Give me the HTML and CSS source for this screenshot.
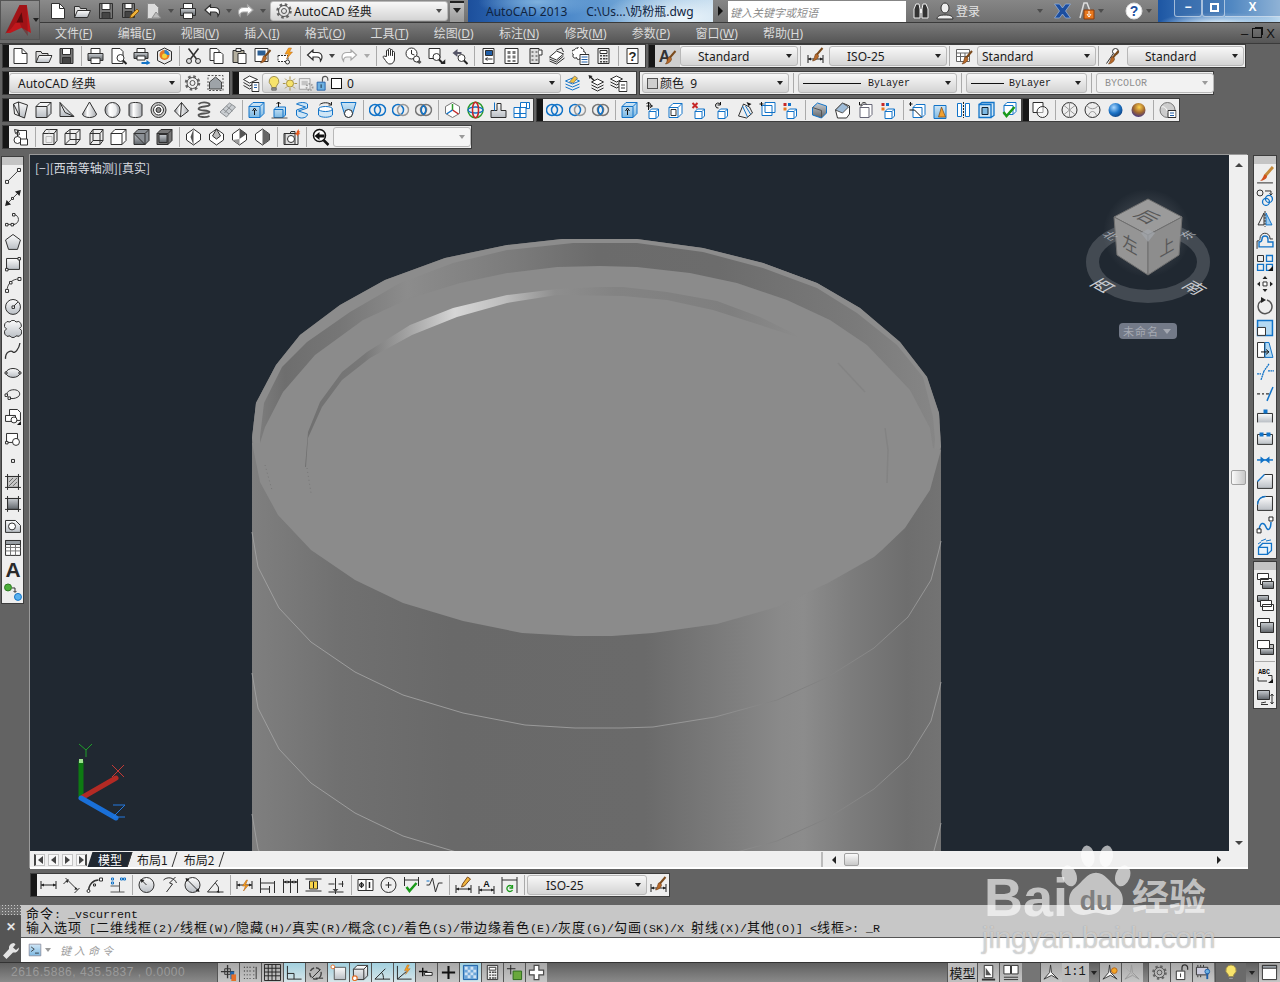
FILE: index.html
```html
<!DOCTYPE html>
<html lang="zh">
<head>
<meta charset="utf-8">
<title>AutoCAD 2013</title>
<link rel="stylesheet" href="styles.css">
</head>
<body>
<svg class="defs" xmlns="http://www.w3.org/2000/svg">
<defs>
<linearGradient id="gs" x1="0" y1="0" x2="0" y2="1"><stop offset="0" stop-color="#fdfdfd"/><stop offset="1" stop-color="#b9bec4"/></linearGradient>
<linearGradient id="gd" x1="0" y1="0" x2="0" y2="1"><stop offset="0" stop-color="#c8ccd0"/><stop offset="1" stop-color="#5f6469"/></linearGradient>
<linearGradient id="gh" x1="0" y1="0" x2="1" y2="0"><stop offset="0" stop-color="#8d9095"/><stop offset=".35" stop-color="#fff"/><stop offset="1" stop-color="#a6a9ae"/></linearGradient>
<linearGradient id="gb" x1="0" y1="0" x2="0" y2="1"><stop offset="0" stop-color="#cfe6f6"/><stop offset="1" stop-color="#7db8e2"/></linearGradient>
<radialGradient id="gball" cx=".38" cy=".32" r=".75"><stop offset="0" stop-color="#a9d7ff"/><stop offset=".55" stop-color="#1c74c7"/><stop offset="1" stop-color="#0c3f7f"/></radialGradient>
<radialGradient id="gball2" cx=".55" cy=".3" r=".8"><stop offset="0" stop-color="#ffd24a"/><stop offset=".5" stop-color="#a0672f"/><stop offset="1" stop-color="#2c2a9a"/></radialGradient>
<g id="br"><path d="M17 1 11 8" stroke="#7a4a1c" stroke-width="2"/><path d="M10 7c2-.5 3 .6 3 2.500-1 2.500-3 4-6 4.500 1.500-1.500 2-4.500 3-7z" fill="#b8692a" stroke="#6b3c14" stroke-width=".6"/></g>
<g id="cu"><path d="M5.500 10.500h7v7h-7z M5.500 10.500l2.500-2.500h7v7l-2.500 2.500 M12.500 10.500 15 8" fill="#fff" stroke="#1173c8"/></g>
<g id="dimb"><path d="M1.500 5v8M16.500 5v8M1.500 9h15" stroke="#222"/><path d="M1.500 9l3-1.500v3zM16.500 9l-3-1.500v3z" fill="#222" stroke="none"/></g>
<g id="mag"><circle cx="11" cy="11" r="3.500" fill="#fff" stroke="#333"/><path d="M13.500 13.500l3.500 3.500" stroke="#222" stroke-width="2"/></g>
<g id="ov"><circle cx="6.500" cy="9" r="5.500" stroke="#1173c8" stroke-width="1.500"/><circle cx="11.500" cy="9" r="5.500" stroke="#1173c8" stroke-width="1.500"/></g>
</defs>
<symbol id="new" viewBox="0 0 18 18"><path d="M2.500 1.500h8l5 5v10h-13z" fill="#fff"/><path d="M10.500 1.500v5h5"/></symbol>
<symbol id="open" viewBox="0 0 18 18"><path d="M1.500 15.500v-11h5l1 2h6v2" fill="#ddd"/><path d="M1.500 15.500l3-7h13l-3 7z" fill="url(#gs)"/></symbol>
<symbol id="save" viewBox="0 0 18 18"><path d="M2.500 1.500h13v15h-13z" fill="#777"/><path d="M5 1.500h8v6H5z" fill="#fff"/><path d="M5 10.500h8v6H5z" fill="#444"/></symbol>
<symbol id="saveas" viewBox="0 0 18 18"><path d="M1.500 1.500h12v14h-12z" fill="#777"/><path d="M4 1.500h7v5H4z" fill="#fff"/><path d="M4 9.500h7v6H4z" fill="#444"/><path d="M9 16l1-3 6-6 2 2-6 6z" fill="#f0b43c" stroke="#8a5a10"/></symbol>
<symbol id="pub" viewBox="0 0 18 18"><path d="M2.500 1.500h7l4 4v11h-11z" fill="#dcdcdc" stroke="#8d8d8d"/><path d="M7 16l4-6 5 6z" fill="#bbb" stroke="#8d8d8d"/></symbol>
<symbol id="print" viewBox="0 0 18 18"><path d="M4.500 6V1.500h9V6" fill="#fff"/><path d="M1.500 6.500h15v7h-15z" fill="url(#gd)"/><path d="M4.500 11h9v5.500h-9z" fill="#fff"/></symbol>
<symbol id="prev" viewBox="0 0 18 18"><path d="M2.500 1.500h8l3 3v12h-11z" fill="#fff"/><use href="#mag"/></symbol>
<symbol id="plot" viewBox="0 0 18 18"><path d="M4.500 5V1.500h8V5" fill="#fff"/><path d="M1.500 5.500h14v6h-14z" fill="url(#gd)"/><path d="M4.500 9h8v4h-8z" fill="#fff"/><path d="M9 15h5v-2l4 3-4 2v-1H9z" fill="#1173c8" stroke="none"/></symbol>
<symbol id="p3d" viewBox="0 0 18 18"><path d="M9 1l7 3.500v9L9 17l-7-3.500v-9z" fill="#e8e8e8"/><circle cx="9" cy="8" r="5" fill="#e97b24" stroke="none"/><path d="M9 3a5 5 0 0 1 5 5H9z" fill="#2a82d0" stroke="none"/><circle cx="9" cy="9" r="2.500" fill="#f3d23a" stroke="none"/></symbol>
<symbol id="cut" viewBox="0 0 18 18"><path d="M4 1.500 12 12M14 1.500 6 12" stroke-width="1.500"/><circle cx="4.500" cy="14" r="2.500" fill="#ddd"/><circle cx="13.500" cy="14" r="2.500" fill="#ddd"/></symbol>
<symbol id="copy" viewBox="0 0 18 18"><path d="M2.500 1.500h7l2 2v10h-9z" fill="#fff"/><path d="M6.500 5.500h7l2 2v9h-9z" fill="#fff"/></symbol>
<symbol id="paste" viewBox="0 0 18 18"><path d="M2.500 3.500h11v12h-11z" fill="#b5b0a0"/><path d="M5.500 1.500h5v3h-5z" fill="#eee"/><path d="M7.500 6.500h8v10h-8z" fill="#fff"/></symbol>
<symbol id="match" viewBox="0 0 18 18"><path d="M1.500 1.500h13v13h-13z" fill="#fff"/><path d="M4 3.500h8v5H4z" fill="#2b5f95" stroke="none"/><use href="#br" y="2"/></symbol>
<symbol id="bolt" viewBox="0 0 18 18"><path d="M1.500 8.500h10v6h-10z" stroke-dasharray="2 1" fill="#fff"/><circle cx="11" cy="15" r="2" fill="#fff"/><path d="M12 1 8.500 7H12l-2 5 6-7h-3l2-4z" fill="#f6a01c" stroke="#b5651d" stroke-width=".5"/></symbol>
<symbol id="undo" viewBox="0 0 18 18"><path d="M7.500 3 2 8l5.500 5v-3h4c2 0 3.500 1 3.500 4 1-1.200 1.500-2.700 1.500-4 0-3-2-4.500-5-4.500h-4z" fill="#fff" stroke-width="1.200"/></symbol>
<symbol id="redo" viewBox="0 0 18 18"><path d="M10.500 3 16 8l-5.500 5v-3h-4c-2 0-3.500 1-3.500 4-1-1.200-1.500-2.700-1.500-4 0-3 2-4.500 5-4.500h4z" fill="#fff" stroke="#a8a8a8" stroke-width="1.200"/></symbol>
<symbol id="hand" viewBox="0 0 18 18"><path d="M5 9.500V4a1 1 0 0 1 2 0v4.500V2.500a1 1 0 0 1 2 0v6-5a1 1 0 0 1 2 0v5.500-3.500a1 1 0 0 1 2 0V12c0 3-2 5-4.500 5S5.500 15.500 4 13.500L1.800 10.500c-.7-1 .7-2 1.500-1.200z" fill="#fff"/></symbol>
<symbol id="zr" viewBox="0 0 18 18"><circle cx="7" cy="6.500" r="5.500" fill="#fff"/><path d="M7 3v4l3 1"/><path d="M9 13l1-2 2-1 5 5-2 2z" fill="#555" stroke="none"/><circle cx="12" cy="12" r="3" fill="#fff"/></symbol>
<symbol id="zw" viewBox="0 0 18 18"><path d="M1.500 1.500h11v10h-11z" fill="#fff"/><use href="#mag" x="-2" y="-1"/><path d="M13 17l5-5v5z" fill="#222" stroke="none"/></symbol>
<symbol id="zp" viewBox="0 0 18 18"><path d="M2 6l5-4v3h4v2H7v3z" fill="#556" stroke="none"/><use href="#mag"/></symbol>
<symbol id="prop" viewBox="0 0 18 18"><path d="M3.500 1.500h11v15h-11z" fill="#fff"/><path d="M6 3.500h7v5H6z" fill="#1f5ea8"/><path d="M6 12h7M6 12l2-1.500M6 12l2 1.500" stroke="#333"/></symbol>
<symbol id="dc" viewBox="0 0 18 18"><path d="M2.500 1.500h13v15h-13z" fill="#fff"/><path d="M5 4h3v3H5zM10 4h3v3h-3zM5 8.500h3v3H5zM10 8.500h3v3h-3zM5 13h3v2H5zM10 13h3v2h-3z" fill="#777" stroke="none"/></symbol>
<symbol id="tp" viewBox="0 0 18 18"><path d="M4.500 1.500h9v15h-9z" fill="#ddd"/><path d="M6 4h2v2H6zM10 4h2v2h-2zM6 8h2v2H6zM10 8h2v2h-2zM6 12h2v2H6zM10 12h2v2h-2z" fill="#888" stroke="none"/><path d="M13.500 3h3v5h-3" fill="#fff"/></symbol>
<symbol id="ss" viewBox="0 0 18 18"><path d="M1 10l7-6 7 3-7 6z" fill="#fff"/><path d="M1 12l7 3 7-6M1 14l7 3 8-6"/><path d="M8 3l5-2 2 4" /></symbol>
<symbol id="mk" viewBox="0 0 18 18"><path d="M3 3a2 2 0 0 1 3-1.500 2 2 0 0 1 4 0 2 2 0 0 1 2 3 2 2 0 0 1 0 4 2 2 0 0 1-3 2 2 2 0 0 1-4 0 2 2 0 0 1-3-3 2 2 0 0 1 1-4.500z" fill="#fff"/><path d="M8.500 7.500h9v10h-9z" fill="#fff"/><path d="M10 10h6M10 12.500h6M10 15h6" stroke="#1f5ea8"/></symbol>
<symbol id="calc" viewBox="0 0 18 18"><path d="M3.500 1.500h11v15h-11z" fill="#eee"/><path d="M5.500 3.500h7v3h-7z" fill="#fff"/><path d="M5.500 8h2v1.500h-2zM8.500 8h2v1.500h-2zM11 8h2v1.500h-2zM5.500 11h2v1.500h-2zM8.500 11h2v1.500h-2zM11 11h2v1.500h-2zM5.500 14h2v1.500h-2zM8.500 14h2v1.500h-2zM11 14h2v1.500h-2z" fill="#444" stroke="none"/></symbol>
<symbol id="dst" viewBox="0 0 18 18"><use href="#dimb" y="3"/><use href="#br" x="-1"/></symbol>
<symbol id="tbs" viewBox="0 0 18 18"><path d="M1.500 2.500h13v12h-13zM1.500 6h13M1.500 9.500h13M5.500 6v8.500M10 6v8.500" fill="#fff" stroke="#666"/><use href="#br" y="3"/></symbol>
<symbol id="mls" viewBox="0 0 18 18"><circle cx="11" cy="4.500" r="3" fill="#fff"/><path d="M8.500 7 2 16.500"/><use href="#br" x="-3" y="3"/></symbol>
<symbol id="gear" viewBox="0 0 18 18"><circle cx="9" cy="9" r="6.500" stroke="#666" stroke-width="2.500" stroke-dasharray="2.500 2.600"/><circle cx="9" cy="9" r="5.500" stroke="#555"/><circle cx="9" cy="9" r="2.500" stroke="#555"/></symbol>
<symbol id="ws" viewBox="0 0 18 18"><path d="M1.500 1.500h15v15h-15z" stroke-dasharray="2 1.500" stroke="#555"/><path d="M9 3l6 5v7H3V8z" fill="#9ea3a8" stroke="#444"/></symbol>
<symbol id="lay" viewBox="0 0 18 18"><path d="M2 5.500 8 2l8 3.500-8 3.500z" fill="#fff"/><path d="M2 8.500l6 3.500 3-1.500M2 11.500l6 3.500 2-1"/><path d="M10.500 8.500h7v9h-7z" fill="#fff"/><path d="M12.500 11h3M12.500 13.500h3" stroke="#1f5ea8"/></symbol>
<symbol id="laym" viewBox="0 0 18 18"><path d="M2 7l7-3 7 3-7 3z" fill="#fff" stroke="#1173c8"/><path d="M2 10l7 3 7-3M2 13l7 3 7-3" stroke="#1173c8"/><path d="M6 8l5-6 3 2-4 5z" fill="#f0c040" stroke="#555" stroke-width=".6"/></symbol>
<symbol id="layc" viewBox="0 0 18 18"><path d="M5 8l6-3 6 3-6 3z" fill="#fff"/><path d="M5 11l6 3 6-3M5 14l6 3 6-3"/><path d="M2 1l4 1-1 1 3 3-1 1-3-3-1 1z" fill="#222" stroke="none"/></symbol>
<symbol id="layp" viewBox="0 0 18 18"><path d="M1 5l6-3 6 3-6 3z" fill="#fff"/><path d="M1 8l6 3 3-1.500M1 11l6 3 3-1.500"/><path d="M9.500 7.500h8v10h-8z" fill="#fff"/><path d="M11.500 11h4M11.500 14h4"/></symbol>
<symbol id="bulb" viewBox="0 0 18 18"><path d="M9 1a5.500 5.500 0 0 0-3.500 9.700c.8.8 1 1.800 1 2.800h5c0-1 .2-2 1-2.800A5.500 5.500 0 0 0 9 1z" fill="#f7e36b" stroke="#9a8a4a"/><path d="M6.500 14h5v2.500h-5z" fill="#999" stroke="#666"/></symbol>
<symbol id="sun" viewBox="0 0 18 18"><circle cx="9" cy="9" r="4" fill="#f7e36b" stroke="#a08a3a"/><path d="M9 1v3M9 14v3M1 9h3M14 9h3M3.500 3.500l2 2M12.500 12.500l2 2M14.500 3.500l-2 2M5.500 12.500l-2 2" stroke="#a08a3a"/></symbol>
<symbol id="frz" viewBox="0 0 18 18"><path d="M1.500 3.500h12v12h-12z" fill="#eee" stroke="#9a9a9a"/><path d="M4 6h7v5H4z" fill="#c4c4c4" stroke="none"/><circle cx="13" cy="13" r="3.500" stroke="#999" stroke-width="2" stroke-dasharray="1.500 1.500"/></symbol>
<symbol id="lck" viewBox="0 0 18 18"><path d="M9.500 7V4a3 3 0 0 1 6 0v2" stroke="#555" stroke-width="1.300"/><path d="M3.500 7.500h9v9h-9z" fill="#6db0e0" stroke="#1f5ea8"/><path d="M8 10v4" stroke="#123"/></symbol>
<symbol id="poly" viewBox="0 0 18 18"><path d="M2 3l5-2 9 3-3 13-5-2z" fill="url(#gs)"/><path d="M7 1l1 14M2 3l1 10 5 2"/></symbol>
<symbol id="box" viewBox="0 0 18 18"><path d="M1.500 5.500l4-4h11v11l-4 4h-11z" fill="url(#gs)"/><path d="M1.500 5.500h11v11M12.500 5.500l4-4"/></symbol>
<symbol id="wedge" viewBox="0 0 18 18"><path d="M2.500 1.500v14h14z" fill="url(#gs)"/><path d="M2.500 1.500l5 10 9 4"/></symbol>
<symbol id="cone" viewBox="0 0 18 18"><path d="M9 1 2 13a7 3.500 0 0 0 14 0z" fill="url(#gh)"/></symbol>
<symbol id="sph" viewBox="0 0 18 18"><circle cx="9" cy="9" r="7.500" fill="url(#gh)"/><ellipse cx="9" cy="9" rx="4.500" ry="6" fill="#fff" stroke="none" opacity=".6"/></symbol>
<symbol id="cyl" viewBox="0 0 18 18"><path d="M2.500 4c0-1.500 2-2.500 6.500-2.500s6.500 1 6.500 2.500v10c0 1.500-2 2.500-6.500 2.500s-6.500-1-6.500-2.500z" fill="url(#gh)"/></symbol>
<symbol id="tor" viewBox="0 0 18 18"><circle cx="9" cy="9" r="7.500" fill="#ccc"/><circle cx="9" cy="9" r="5" fill="#fff"/><circle cx="9" cy="9" r="2.500" fill="#888"/></symbol>
<symbol id="pyr" viewBox="0 0 18 18"><path d="M9 1.500 2 10l6 6 8-6z" fill="url(#gh)"/><path d="M9 1.500 8 16"/></symbol>
<symbol id="hel" viewBox="0 0 18 18"><path d="M3 3c5-3 12-1 11 1-1 2-11 1-11 4 0 2 11 1 11 3s-11 1-11 3c0 2 7 3 11 1" stroke="#555" stroke-width="1.800"/></symbol>
<symbol id="psf" viewBox="0 0 18 18"><path d="M1.500 11 11 2l6 4-9 10z" fill="#c9cdd1" stroke="#8b8f93"/><path d="M4.500 8l6 5M8 5l6 5M6 12l7-8" stroke="#8b8f93"/></symbol>
<symbol id="ext" viewBox="0 0 18 18"><path d="M1.500 5.500l4-4h11v11l-4 4h-11z" fill="url(#gb)" stroke="#1173c8"/><path d="M1.500 5.500h11v11M12.500 5.500l4-4" stroke="#1173c8"/><path d="M7 14V9M5 10l2-3 2 3" stroke="#111"/></symbol>
<symbol id="pp" viewBox="0 0 18 18"><path d="M3.500 8.500h9v8h-9zM3.500 8.500 6 6h9v8l-2.500 2.500" fill="url(#gb)" stroke="#1173c8"/><path d="M8 6V1M6 3l2-2 2 2" stroke="#111"/><path d="M1 17h16" stroke="#555"/></symbol>
<symbol id="swp" viewBox="0 0 18 18"><path d="M3 3c3-2 9-2 11 0v4l-9 3 9 3c0 2-2 4-6 4-2 0-4-1-5-3V9l9-3z" fill="#cfe6f6" stroke="#1173c8"/></symbol>
<symbol id="rev" viewBox="0 0 18 18"><path d="M2 8h14v6c-2 3-12 3-14 0z" fill="#cfe6f6" stroke="#1173c8"/><ellipse cx="9" cy="8" rx="7" ry="2.500" fill="#fff" stroke="#1173c8"/><path d="M3 4c2-3 10-3 12 0" stroke="#222"/><path d="M15 1v3h-3" stroke="#222"/></symbol>
<symbol id="lft" viewBox="0 0 18 18"><path d="M1.500 1.500h15l-3 10a4.500 4.500 0 0 1-9 0z" fill="url(#gb)" stroke="#1173c8"/><circle cx="9" cy="12.500" r="4" fill="#fff" stroke="#222"/></symbol>
<symbol id="un" viewBox="0 0 18 18"><use href="#ov"/></symbol>
<symbol id="sub" viewBox="0 0 18 18"><circle cx="6.500" cy="9" r="5.500" stroke="#1173c8" stroke-width="1.500"/><circle cx="11.500" cy="9" r="5.500" stroke="#999" stroke-width="1.500"/></symbol>
<symbol id="int" viewBox="0 0 18 18"><circle cx="6.500" cy="9" r="5.500" stroke="#777" stroke-width="1.500"/><circle cx="11.500" cy="9" r="5.500" stroke="#777" stroke-width="1.500"/><path d="M9 4.500a5.500 5.500 0 0 1 0 9 5.500 5.500 0 0 1 0-9z" stroke="#1173c8" stroke-width="1.500"/></symbol>
<symbol id="mv3" viewBox="0 0 18 18"><path d="M9 1.500l7 4v7l-7 4-7-4v-7z" stroke="#777" fill="#fff"/><path d="M9 9V3" stroke="#2a9a2a" stroke-width="1.500"/><path d="M9 9l6 4" stroke="#c62828" stroke-width="1.500"/><path d="M9 9l-6 4" stroke="#1173c8" stroke-width="1.500"/></symbol>
<symbol id="ro3" viewBox="0 0 18 18"><ellipse cx="9" cy="9" rx="7.500" ry="7.800" stroke="#2a9a2a" stroke-width="1.500"/><ellipse cx="9" cy="9" rx="7.500" ry="3" stroke="#1173c8" stroke-width="1.300"/><ellipse cx="9" cy="9" rx="3" ry="7.800" stroke="#c62828" stroke-width="1.500"/></symbol>
<symbol id="al3" viewBox="0 0 18 18"><path d="M1.500 16.500v-7h6v-7h4v7h5v7z" fill="url(#gs)"/><path d="M5 1.500v8" stroke="#1173c8"/></symbol>
<symbol id="ar3" viewBox="0 0 18 18"><g stroke="#1173c8" fill="#fff"><path d="M8 1.500h6v6H8zM14 1.500h3v6h-3z"/><path d="M1.500 6.500h6v6h-6zM7.500 6.500h6v6h-6z"/><path d="M1.500 12.500h6v4h-6zM7.500 12.500h6v4h-6z"/></g></symbol>
<symbol id="fe1" viewBox="0 0 18 18"><use href="#ext"/></symbol>
<symbol id="fe2" viewBox="0 0 18 18"><use href="#cu"/><path d="M3 5h5M6 3l3 2-3 2M5 1v8M3 3l2-2 2 2" stroke="#111"/></symbol>
<symbol id="fe3" viewBox="0 0 18 18"><path d="M2.500 6.500h9v10h-9z M2.500 6.500l4-4h9v10l-4 4M11.500 6.500l4-4" fill="#fff" stroke="#1173c8"/><path d="M4.500 8.500h5v6h-5z" fill="none" stroke="#333"/></symbol>
<symbol id="fe4" viewBox="0 0 18 18"><use href="#cu"/><path d="M3 2l5 5M8 2 3 7" stroke="#c62828" stroke-width="2"/></symbol>
<symbol id="fe5" viewBox="0 0 18 18"><use href="#cu"/><path d="M6 7a2.500 2.500 0 1 1 2-3" stroke="#111"/><path d="M8 1v3H5" stroke="#111"/></symbol>
<symbol id="fe6" viewBox="0 0 18 18"><path d="M3 15 8 3l6 3 3 6-6 5z" fill="#eee" stroke="#333"/><path d="M7 5l5 11M10 5l5 8" stroke="#1173c8"/><path d="M11 1l5 2-3 2z" fill="#111" stroke="none"/></symbol>
<symbol id="fe7" viewBox="0 0 18 18"><path d="M6.500 1.500h10v10h-10z M3.500 4.500h10v10h-10z" fill="#fff" stroke="#1173c8"/><path d="M1 3h4M3 1v4M1 1" stroke="#111"/></symbol>
<symbol id="fe8" viewBox="0 0 18 18"><use href="#cu"/><path d="M2 2h3v3H2z" fill="#c62828" stroke="none"/><path d="M6.500 2h3v3h-3z" fill="#1173c8" stroke="none"/><path d="M2 6.500h3v3H2z" fill="#e97b24" stroke="none"/></symbol>
<symbol id="ed1" viewBox="0 0 18 18"><path d="M2 6.500 7 2l9 3v7l-5 5-9-3z" fill="url(#gd)" stroke="#1173c8"/><path d="M2 6.500l9 3v7" stroke="#555"/></symbol>
<symbol id="ed2" viewBox="0 0 18 18"><path d="M2 9 9 2l7 3v8l-3 4H4z" fill="#fff" stroke="#333"/><path d="M2 9 9 2l6 4-6 6z" fill="#9fbcd8" stroke="#555"/></symbol>
<symbol id="ed3" viewBox="0 0 18 18"><path d="M3.500 6.500h9v10h-9zM3.500 6.500l3-3h9v10l-3 3" fill="#fff" stroke="#667"/><path d="M5 3a3 3 0 0 1 5 0M3 1v3h3" stroke="#111"/></symbol>
<symbol id="s1" viewBox="0 0 18 18"><path d="M4.500 6.500h9v10h-9zM4.500 6.500l3-3h9v10l-3 3" fill="#fff" stroke="#1173c8"/><path d="M1 9h5l7 7" stroke="#111"/><path d="M2 1v4M0 3h4" stroke="#111"/></symbol>
<symbol id="s2" viewBox="0 0 18 18"><path d="M2.500 4.500h12v13h-12z" fill="url(#gb)" stroke="#1173c8"/><path d="M10 6l-3 10h7z" fill="#f0a030" stroke="#7a4a1c" stroke-width=".7"/></symbol>
<symbol id="s3" viewBox="0 0 18 18"><path d="M3 2.500h4v13H3zM11 2.500h4v13h-4z" fill="#fff" stroke="#1173c8"/><path d="M9 1v16" stroke="#222" stroke-dasharray="2 1"/></symbol>
<symbol id="s4" viewBox="0 0 18 18"><path d="M1.500 3.500h12v13h-12zM1.500 3.500l3-2h12v13l-3 2" fill="#cfe6f6" stroke="#1173c8" stroke-width="1.300"/><path d="M4.500 6.500h6v7h-6z" fill="#7db8e2" stroke="#123"/></symbol>
<symbol id="s5" viewBox="0 0 18 18"><path d="M3.500 4.500h9v9h-9zM3.500 4.500l3-3h9v9l-3 3" fill="#fff" stroke="#1173c8"/><path d="M3 11l3 4 8-9" stroke="#1a9a1a" stroke-width="2.500"/></symbol>
<symbol id="cb1" viewBox="0 0 18 18"><path d="M1.500 1.500h10v10h-10z" fill="#fff"/><circle cx="11" cy="11" r="5.500" fill="#fff" fill-opacity=".5"/></symbol>
<symbol id="vw1" viewBox="0 0 18 18"><circle cx="9" cy="9" r="7.500"/><path d="M3 4l12 10M3 14 15 4M9 1.500v15" stroke="#999"/></symbol>
<symbol id="vw2" viewBox="0 0 18 18"><circle cx="9" cy="9" r="7.500"/><path d="M3 4c3 5 9 5 12 0M5 15c1-6 7-6 8 0" stroke="#999"/></symbol>
<symbol id="vw3" viewBox="0 0 18 18"><circle cx="9" cy="9" r="7" fill="url(#gball)" stroke="none"/></symbol>
<symbol id="vw4" viewBox="0 0 18 18"><circle cx="9" cy="9" r="7" fill="url(#gball2)" stroke="none"/></symbol>
<symbol id="vw5" viewBox="0 0 18 18"><circle cx="9" cy="9" r="7.500" fill="#ccc" stroke="#777"/><path d="M3 6c3-1 6 2 6 6" stroke="#fff"/><path d="M9.500 9.500h8v7h-8z" fill="#fff"/><path d="M11.500 12h4M11.500 14.500h4" stroke="#1f5ea8"/></symbol>
<symbol id="vt" viewBox="0 0 18 18"><path d="M6 2.500h9v10h-9z" fill="#fff"/><path d="M3 1.500l5 1-1 1 1 3-2 1-1-3-1 1z" /><circle cx="6" cy="12" r="3.500" fill="#fff"/><path d="M9 11h7v6H9z" fill="#fff"/></symbol>
<symbol id="v1" viewBox="0 0 18 18"><path d="M2.500 5.500h11v11h-11zM2.500 5.500l3-4h11v11l-3 4M13.500 5.500l3-4"/><path d="M5.500 8.500h6v6h-6zM8.500 1.500v4" stroke="#bbb"/></symbol>
<symbol id="v2" viewBox="0 0 18 18"><path d="M6.500 1.500h10v10h-10zM1.500 5.500h11v11h-11zM1.500 5.500l5-4M12.500 5.500l4-4M1.500 16.500l5-5M12.500 16.500l4-5" fill="none"/></symbol>
<symbol id="v3" viewBox="0 0 18 18"><path d="M3.500 5.500h10v11h-10zM3.500 5.500l3-4h10v11l-3 4M13.500 5.500l3-4M3.500 16.500l3-4h10M6.500 1.500v11"/></symbol>
<symbol id="v4" viewBox="0 0 18 18"><path d="M1.500 5.500h11v11h-11zM1.500 5.500l4-4h11v11l-4 4M12.500 5.500l4-4" fill="#fff"/></symbol>
<symbol id="v5" viewBox="0 0 18 18"><path d="M1.500 5.500h11v11h-11z" fill="url(#gd)"/><path d="M1.500 5.500l4-4h11v11l-4 4z" fill="#8a8f94"/><path d="M1.500 5.500h11v11M12.500 5.500l4-4" stroke="#333"/></symbol>
<symbol id="v6" viewBox="0 0 18 18"><path d="M1.500 5.500l4-4h11v11l-4 4h-11z" fill="#777"/><path d="M3.500 6.500h8v8h-8z" fill="url(#gd)"/><path d="M12.500 5.500l4-4M1.500 5.500h11v11"/></symbol>
<symbol id="d1" viewBox="0 0 18 18"><path d="M9 1 2 6v6l7 5 7-5V6z" fill="#fff"/><path d="M9 1 6 9l3 8z" fill="#555" stroke="none"/></symbol>
<symbol id="d2" viewBox="0 0 18 18"><path d="M9 1 2 6v6l7 5 7-5V6z" fill="#fff"/><path d="M9 1 5 8l4 3 4-3z" fill="#bbb"/></symbol>
<symbol id="d3" viewBox="0 0 18 18"><path d="M9 1 2 6v6l7 5 7-5V6z" fill="#fff"/><path d="M9 1l7 5-7 5z" fill="#555" stroke="none"/><path d="M9 11 2 12l7 5z" fill="#999" stroke="none"/></symbol>
<symbol id="d4" viewBox="0 0 18 18"><path d="M9 1 2 6v6l7 5 7-5V6z" fill="#fff"/><path d="M9 1v16l7-5V6z" fill="#666" stroke="none"/></symbol>
<symbol id="cam" viewBox="0 0 18 18"><path d="M2.500 5.500h5l1-2h4v13h-10z" fill="#ddd"/><path d="M1.500 5.500h14v11h-14z"/><circle cx="8.500" cy="11" r="3.500" fill="#fff"/><path d="M14 4l2-3 .5 2.500L18 3l-1.500 2L18 6l-2.500.5-.5 2-1-2-2-.5 2-1z" fill="#e8571c" stroke="none"/></symbol>
<symbol id="vid" viewBox="0 0 18 18"><circle cx="8" cy="7.500" r="6" fill="#fff" stroke="#111" stroke-width="1.500"/><path d="M3 8l5-4v2.500h5v3H8V12z" fill="#111" stroke="none"/><path d="M12 12l5 5" stroke="#111" stroke-width="2.500"/></symbol>
<symbol id="line" viewBox="0 0 18 18"><path d="M3 15 15 3" stroke="#444"/><path d="M1.500 13.500h3v3h-3zM13.500 1.500h3v3h-3z" fill="#fff"/></symbol>
<symbol id="xl" viewBox="0 0 18 18"><path d="M2 16 16 2" stroke="#444"/><path d="M7.500 8.500h2v2h-2z" fill="#fff"/><path d="M17 1l-6 1.500 4.500 4.500zM1 17l6-1.500L2.500 11z" fill="#222" stroke="none"/></symbol>
<symbol id="pl" viewBox="0 0 18 18"><path d="M3 13.500h8M10 13.500c6-1 6-9 0-10" stroke="#444"/><path d="M1.500 12.500h2.500v2.500h-2.500zM7 12.500h2.500v2.500H7zM8.500 2.500h2.500v2.500H8.500z" fill="#fff"/></symbol>
<symbol id="pg" viewBox="0 0 18 18"><path d="M9 1.500l7.500 5.500-3 9.500h-9l-3-9.500z" fill="url(#gs)"/></symbol>
<symbol id="rc" viewBox="0 0 18 18"><path d="M2.500 3.500h13v11h-13z" fill="url(#gs)"/><path d="M1.500 13.500h2.500v2.500h-2.500zM14 2.500h2.500v2.500H14z" fill="#fff"/></symbol>
<symbol id="ac" viewBox="0 0 18 18"><path d="M3 15C3 8 8 3 15 3" stroke="#444"/><path d="M1.500 13.500h3v3h-3zM5.500 5.500h2.500V8H5.500zM14 1.500h3v3h-3z" fill="#fff"/></symbol>
<symbol id="ci" viewBox="0 0 18 18"><circle cx="9" cy="9" r="7.500" fill="url(#gs)"/><path d="M9 9l5-5" stroke="#333"/><path d="M8 8h2.500v2.500H8z" fill="#fff"/></symbol>
<symbol id="rv" viewBox="0 0 18 18"><path d="M6 2a3.500 3.500 0 0 1 6 0 3.500 3.500 0 0 1 3.500 6.500A3.500 3.500 0 0 1 12 16a3.500 3.500 0 0 1-6 0 3.500 3.500 0 0 1-3.500-7A3.500 3.500 0 0 1 6 2z" fill="url(#gs)"/></symbol>
<symbol id="sp" viewBox="0 0 18 18"><path d="M1.500 17C1 10 7 8 9 10s6-3 7-9" stroke="#333" stroke-width="1.300"/></symbol>
<symbol id="el" viewBox="0 0 18 18"><ellipse cx="9" cy="9" rx="7" ry="4.500" fill="url(#gs)"/><path d="M1 8h2v2H1zM15 8h2v2h-2z" fill="#fff"/></symbol>
<symbol id="ea" viewBox="0 0 18 18"><path d="M3 9c-1-4 5-6 9-5s5 5 2 7-7 2-9 1" stroke="#333"/><path d="M1 8h2.500v2.500H1zM4 11h2.500v2.500H4z" fill="#fff"/></symbol>
<symbol id="ins" viewBox="0 0 18 18"><path d="M5.500 1.500h8l3 3v8h-11z" fill="#fff"/><path d="M1.500 7.500h10v6h-10z" fill="#fff"/><circle cx="10" cy="12" r="3" fill="#fff"/><path d="M13 17l4-4v4z" fill="#111" stroke="none"/></symbol>
<symbol id="mkb" viewBox="0 0 18 18"><path d="M2.500 3.500h11v9h-11z" fill="#fff"/><circle cx="12" cy="12" r="3.500" fill="#fff"/><path d="M1.500 11.500h2.500v2.500h-2.500z" fill="#fff"/></symbol>
<symbol id="sd" viewBox="0 0 18 18"><path d="M7.500 7.500h3v3h-3z" fill="#eee"/></symbol>
<symbol id="ha" viewBox="0 0 18 18"><path d="M3.500 3.500h11v11h-11z" fill="#c9c9c9"/><path d="M5 9l4-4M5 13l8-8M9 13l4-4" stroke="#666"/><path d="M1 3.500h16M1 14.500h16M3.500 1v16M14.500 1v16"/></symbol>
<symbol id="gr" viewBox="0 0 18 18"><path d="M3.500 3.500h11v11h-11z" fill="url(#gd)"/><path d="M1 3.500h16M1 14.500h16M3.500 1v16M14.500 1v16"/></symbol>
<symbol id="rg" viewBox="0 0 18 18"><path d="M1.500 3.500h10l5 5v7h-15z" fill="url(#gs)"/><circle cx="8" cy="9.500" r="3.500" fill="#fff"/></symbol>
<symbol id="tb" viewBox="0 0 18 18"><path d="M1.500 1.500h15v15h-15z" fill="#fff"/><path d="M1.500 1.500h15v4h-15z" fill="#9aa0a6"/><path d="M1.500 8.500h15M1.500 12h15M6.500 5.500v11M11.500 5.500v11" stroke="#777"/></symbol>
<symbol id="as" viewBox="0 0 18 18"><circle cx="4" cy="4.500" r="3.500" fill="#4caf3a" stroke="#2c7a20"/><circle cx="14" cy="14" r="3.500" fill="#59b0ee" stroke="#1173c8"/><path d="M8 5h3v4M9.500 8l1.500 1.500L12.500 8"/></symbol>
<symbol id="er" viewBox="0 0 18 18"><path d="M17 1l-8 9" stroke="#c48a3a" stroke-width="3"/><path d="M8 9c2-.5 3 .6 3 2-1 2-3 3.500-7 4 2-1.500 3-3.500 4-6z" fill="#d2501e" stroke="none"/><path d="M1 17h16"/></symbol>
<symbol id="co" viewBox="0 0 18 18"><circle cx="4" cy="5" r="3"/><circle cx="13" cy="11" r="3.500" stroke="#1173c8" stroke-width="1.300"/><circle cx="10" cy="14" r="3.500" stroke="#1173c8" stroke-width="1.300"/><path d="M9 3h6v4M13.500 5.500 15 7l1.500-1.500"/></symbol>
<symbol id="mi" viewBox="0 0 18 18"><path d="M8 3 2 15h6z"/><path d="M10 3l6 12h-6z" fill="#9ccbee" stroke="#1173c8"/><path d="M9 1v16" stroke-dasharray="2 1"/></symbol>
<symbol id="of" viewBox="0 0 18 18"><path d="M3 15v-5c2 0 3-1 3-3a3 3 0 0 1 6 0v3h5v5z" stroke="#1173c8" stroke-width="1.400"/><path d="M1 17v-8c2 0 3-1 3-2.500A5 5 0 0 1 14 6v1h3" stroke="#333"/></symbol>
<symbol id="ay" viewBox="0 0 18 18"><path d="M1.500 1.500h6v6h-6z"/><path d="M10.500 1.500h6v6h-6zM1.500 10.500h6v6h-6z" stroke="#1173c8" stroke-width="1.300"/><path d="M10.500 10.500h6v6h-6z" stroke="#1173c8" stroke-width="1.300"/><path d="M12 17l5-5v5z" fill="#111" stroke="none"/></symbol>
<symbol id="mo" viewBox="0 0 18 18"><path d="M7 7h4v4H7z" fill="#fff"/><path d="M9 1l2.500 3h-5zM9 17l2.500-3h-5zM1 9l3-2.500v5zM17 9l-3-2.500v5z" fill="#222" stroke="none"/></symbol>
<symbol id="ro" viewBox="0 0 18 18"><path d="M5 4a7 7 0 1 0 6-1" stroke="#555" stroke-width="1.500"/><path d="M5 0l5 3-5 3z" fill="#222" stroke="none"/></symbol>
<symbol id="sc" viewBox="0 0 18 18"><path d="M1.500 1.500h15v15h-15z" fill="#b4d9f2" stroke="#1173c8" stroke-width="1.500"/><path d="M1.500 8.500h8v8h-8z" fill="#fff" stroke="#333"/></symbol>
<symbol id="st" viewBox="0 0 18 18"><path d="M1.500 1.500h7v15h-7z" fill="#fff"/><path d="M9 1.500h4l4 15H9z" fill="#b4d9f2" stroke="#1173c8"/><path d="M5 11h7M10 8.500l3 2.500-3 2.500" stroke="#111"/></symbol>
<symbol id="tr" viewBox="0 0 18 18"><path d="M1 11h4M8 8l-3 9M13 1 8 8M12 8h6" stroke="#1173c8" stroke-width="1.300" stroke-dasharray="2 .5"/></symbol>
<symbol id="xt" viewBox="0 0 18 18"><path d="M1 9h3M6 9h2M10 9h3" stroke="#333" stroke-width="1.300"/><path d="M17 2l-6 14" stroke="#1173c8" stroke-width="1.500"/></symbol>
<symbol id="bp" viewBox="0 0 18 18"><path d="M1.500 15.500V6.500h15v9" fill="url(#gs)"/><path d="M7.500 2.500h4v4h-4z" fill="#1173c8" stroke="none"/></symbol>
<symbol id="bk" viewBox="0 0 18 18"><path d="M1.500 15.500V5.500h15v10" fill="url(#gs)"/><path d="M3.500 3.500h4v4h-4zM10.500 3.500h4v4h-4z" fill="#1173c8" stroke="none"/><path d="M1.500 15.500h15"/></symbol>
<symbol id="jn" viewBox="0 0 18 18"><path d="M1 9h16" stroke="#1173c8" stroke-width="1.500"/><path d="M9 9 4.500 5.500v7zM9 9l4.500-3.500v7z" fill="#1173c8" stroke="none"/></symbol>
<symbol id="ch" viewBox="0 0 18 18"><path d="M1.500 16.500V9.500l7-7h8v14z" fill="url(#gs)"/><path d="M1.500 9.500l7-7" stroke="#1173c8" stroke-width="1.300"/></symbol>
<symbol id="fi" viewBox="0 0 18 18"><path d="M1.500 16.500v-6c0-5 4-8 8-8h7v14z" fill="url(#gs)"/><path d="M1.500 10.500c0-5 4-8 8-8" stroke="#1173c8" stroke-width="1.300"/></symbol>
<symbol id="bl" viewBox="0 0 18 18"><path d="M3 14c1-8 5-8 7-3s5 2 5-5" stroke="#1173c8" stroke-width="1.500"/><path d="M1 13h4v4H1zM13 1h4v4h-4z" fill="#fff" stroke="#222"/></symbol>
<symbol id="xp" viewBox="0 0 18 18"><path d="M2.500 9.500h9v7h-9zM2.500 9.500l4-4h9v7l-4 4" stroke="#1173c8" stroke-width="1.300" fill="#e8f3fb"/><path d="M5 3 10 1M10 3l5-1M2 6l3-2" stroke="#1173c8"/></symbol>
<symbol id="o1" viewBox="0 0 18 18"><path d="M1.500 1.500h11v6h-11zM4.500 6.500h11v6h-11z" fill="#fff"/><path d="M6.500 9.500h11v7h-11z" fill="url(#gd)"/></symbol>
<symbol id="o2" viewBox="0 0 18 18"><path d="M1.500 1.500h11v6h-11z" fill="url(#gd)"/><path d="M4.500 6.500h11v6h-11zM6.500 10.500h11v6h-11z" fill="#fff"/></symbol>
<symbol id="o3" viewBox="0 0 18 18"><path d="M1.500 2.500h12v8h-12z" fill="#fff"/><path d="M4.500 6.500h13v10h-13z" fill="url(#gd)"/></symbol>
<symbol id="o4" viewBox="0 0 18 18"><path d="M1.500 2.500h12v8h-12z" fill="#fff"/><path d="M4.500 10.500h13v6h-13z" fill="url(#gd)"/><path d="M13.500 6.500h4v4h-4z" fill="#bbb"/></symbol>
<symbol id="stx" viewBox="0 0 18 18"><path d="M1.500 2.500h12v9h-12z" fill="url(#gd)"/><path d="M16 6v10M14.500 8 16 6l1.500 2M14.500 14l1.500 2 1.500-2M5 15l5-1M5 16.500h7" stroke="#333"/></symbol>
<symbol id="dl" viewBox="0 0 18 18"><use href="#dimb"/></symbol>
<symbol id="da" viewBox="0 0 18 18"><path d="M3 2l12 12M1 8 6 3M12 17l5-5" /><path d="M3 5l3-1-1 3zM15 13l-3 1 1-3z" fill="#222" stroke="none"/></symbol>
<symbol id="dc2" viewBox="0 0 18 18"><path d="M3 16C3 8 8 4 13 4" stroke="#333" stroke-width="1.500"/><circle cx="3" cy="15" r="1.500" fill="#fff"/><path d="M14 2h3v3h-3zM8 8h2v2H8z" fill="#fff"/></symbol>
<symbol id="dor" viewBox="0 0 18 18"><path d="M2 16h14M2 10h9v6M11 6v4" stroke="#555"/><path d="M3 2h2v2H3zM3 6h2v2H3zM12 2h2v2h-2zM15 2h2v2h-2z" stroke="#1173c8" fill="none"/></symbol>
<symbol id="dr" viewBox="0 0 18 18"><circle cx="9" cy="9" r="7.500" fill="url(#gs)"/><path d="M9 9 4 4"/><path d="M3 3l4 1-3 3z" fill="#222" stroke="none"/></symbol>
<symbol id="dj" viewBox="0 0 18 18"><path d="M3 4a8 8 0 0 1 13 3"/><path d="M15 1 9 7l3 1-6 8" /></symbol>
<symbol id="dd" viewBox="0 0 18 18"><circle cx="9" cy="9" r="7.500" fill="url(#gs)"/><path d="M3 3l12 12"/><path d="M2 2l4 1-3 3zM16 16l-4-1 3-3z" fill="#222" stroke="none"/></symbol>
<symbol id="dg" viewBox="0 0 18 18"><path d="M1 16h16M1 16 11 4"/><path d="M9 7a9 9 0 0 1 3 9" /><path d="M12 14l1 3-3-1z" fill="#222" stroke="none"/></symbol>
<symbol id="dq" viewBox="0 0 18 18"><use href="#dimb"/><path d="M11 4 7 10h3l-2 5 5-6h-3l2-5z" fill="#f6a01c" stroke="#b5651d" stroke-width=".6"/></symbol>
<symbol id="db" viewBox="0 0 18 18"><path d="M2 2v15M16 5v12M2 7h14M2 13h9M11 10v7"/></symbol>
<symbol id="dn" viewBox="0 0 18 18"><path d="M2 3v14M9 3v14M16 3v14M2 6h14"/><path d="M2 6l3-1.500v3zM9 6l-3-1.500v3zM9 6l3-1.500v3zM16 6l-3-1.500v3z" fill="#222" stroke="none"/></symbol>
<symbol id="ds" viewBox="0 0 18 18"><path d="M1 3h16M1 15h16"/><path d="M5 5h8v8H5z" fill="#f6d24a"/><path d="M9 6v6" stroke="#222"/></symbol>
<symbol id="dk" viewBox="0 0 18 18"><path d="M1 8h6M1 16h7M8 2v16M8 16h8M15 5v6M11 8h5"/><path d="M8 16l-3-3h6z" fill="#444" stroke="none"/></symbol>
<symbol id="dt" viewBox="0 0 18 18"><path d="M1.500 3.500h15v11h-15z" fill="#fff"/><path d="M9.500 3.500v11"/><path d="M5 6v6M2.500 9h5" stroke="#222"/><circle cx="5" cy="9" r="2"/><path d="M13 6v6" stroke="#222" stroke-width="1.500"/></symbol>
<symbol id="dm" viewBox="0 0 18 18"><circle cx="9" cy="9" r="7.500"/><path d="M9 6v6M6 9h6"/></symbol>
<symbol id="di" viewBox="0 0 18 18"><path d="M2 1v9M16 1v9M2 4h14"/><path d="M4 11l3 4 7-8" stroke="#1a9a1a" stroke-width="2.500"/></symbol>
<symbol id="dw" viewBox="0 0 18 18"><path d="M1 9h3l3-7 3 14 3-9h4"/><path d="M4 5h-3" stroke="#1173c8"/></symbol>
<symbol id="de" viewBox="0 0 18 18"><use href="#dimb" y="4"/><path d="M7 11l1-3 5-7 3 2-6 7z" fill="#f0b43c" stroke="#7a4a1c"/></symbol>
<symbol id="dxb" viewBox="0 0 18 18"><use href="#dimb" y="5"/></symbol>
<symbol id="du" viewBox="0 0 18 18"><path d="M1.500 1v16M16.500 1v16M1.500 4h15"/><path d="M12 11a3 3 0 1 0 0 3M12 9v3h-3" stroke="#1a9a1a" stroke-width="1.300"/></symbol>
<symbol id="st1" viewBox="0 0 18 18"><path d="M8 1v14M1 8h14" stroke="#333" stroke-width="1.400"/><path d="M5 5h6v6H5z" stroke="#333"/><path d="M11 8h4v8h-4z" fill="#1f66b0" stroke="none"/><path d="M12 11h5v7h-5z" fill="#e4702a" stroke="none"/></symbol>
<symbol id="st2" viewBox="0 0 18 18"><path d="M2 3h1v1H2zM5 3h1v1H5zM8 3h1v1H8zM2 7h1v1H2zM5 7h1v1H5zM8 7h1v1H8zM2 11h1v1H2zM5 11h1v1H5zM8 11h1v1H8zM2 15h1v1H2zM5 15h1v1H5zM8 15h1v1H8zM12 3h1v1h-1zM12 7h1v1h-1zM12 11h1v1h-1zM12 15h1v1h-1z" fill="#111" stroke="none"/><path d="M15 3v13" stroke="#333"/></symbol>
<symbol id="st3" viewBox="0 0 18 18"><path d="M.5.500h17v17H.5zM.5 4.500h17M.5 8.500h17M.5 12.500h17M4.500.500v17M8.500.500v17M12.500.500v17" stroke="#222"/></symbol>
<symbol id="st4" viewBox="0 0 18 18"><path d="M1.500 2v14h15M1.500 10h7v6" stroke="#222"/></symbol>
<symbol id="st5" viewBox="0 0 18 18"><circle cx="8" cy="10" r="6" stroke="#444" stroke-width="1.500" stroke-dasharray="5 2"/><path d="M4 15l9-9M8 15h8" stroke="#222"/></symbol>
<symbol id="st6" viewBox="0 0 18 18"><path d="M4.500 3.500h12v13h-12z" fill="url(#gs)" stroke="#555"/><circle cx="3" cy="3" r="2" fill="#fff" stroke="#e4702a"/></symbol>
<symbol id="st7" viewBox="0 0 18 18"><use href="#box"/><circle cx="3" cy="15" r="2.500" fill="#fff" stroke="#e4702a" stroke-width="1.300"/></symbol>
<symbol id="st8" viewBox="0 0 18 18"><path d="M1 16h16M1 16 12 5M8 9c2 2 2 5 2 7" stroke="#222"/></symbol>
<symbol id="st9" viewBox="0 0 18 18"><path d="M1.500 2v14h15M1.500 16 11 8" stroke="#222"/><path d="M12 1 9 7h3l-2 4 5-6h-3l2-4z" fill="#f6a01c" stroke="#b5651d" stroke-width=".5"/></symbol>
<symbol id="st10" viewBox="0 0 18 18"><path d="M5 4v9M1 8h9" stroke="#111" stroke-width="1.500"/><path d="M7 9h8v3H7z" fill="#fff" stroke="#222"/></symbol>
<symbol id="st11" viewBox="0 0 18 18"><path d="M9 2v14M2 9h14" stroke="#111" stroke-width="2.200"/></symbol>
<symbol id="st12" viewBox="0 0 18 18"><path d="M1.500 1.500h15v15h-15z" fill="#6ea7d9" stroke="#1a5fa8"/><path d="M3 3h3v3H3zM9 3h3v3H9zM6 6h3v3H6zM12 6h3v3h-3zM3 9h3v3H3zM9 9h3v3H9zM6 12h3v3H6zM12 12h3v3h-3z" fill="#cfe2f3" stroke="none"/></symbol>
<symbol id="st14" viewBox="0 0 18 18"><path d="M5 1v10M1 5h9" stroke="#222"/><path d="M7.500 7.500h9v9h-9z" fill="#69a83c" stroke="#2c6a18"/></symbol>
<symbol id="st15" viewBox="0 0 18 18"><path d="M6.500 1.500h5v5h5v5h-5v5h-5v-5h-5v-5h5z" fill="#fff" stroke="#4a4a4a" stroke-width="1.300"/></symbol>
<symbol id="sl" viewBox="0 0 18 18"><path d="M4.500 1.500h9v13h-9z" fill="#fff"/><path d="M6 4v8h6z" fill="#555" stroke="none"/><path d="M2 16.500h14" stroke-width="2"/></symbol>
<symbol id="sll" viewBox="0 0 18 18"><path d="M1.500 1.500h7v9h-7zM9.500 1.500h7v9h-7z" fill="#fff"/><path d="M1.500 14h15M1.500 16.500h15" stroke="#333"/></symbol>
<symbol id="an" viewBox="0 0 18 18"><path d="M8 1 9 9l7 7-7-4-8 4 6-7z" fill="#fff" stroke="#333"/></symbol>
<symbol id="an2" viewBox="0 0 18 18"><path d="M8 1 9 9l7 7-7-4-8 4 6-7z" fill="#fff" stroke="#333"/><circle cx="13" cy="7" r="3" fill="#f5a623" stroke="#b5651d"/></symbol>
<symbol id="an3" viewBox="0 0 18 18"><path d="M8 1 9 9l7 7-7-4-8 4 6-7z" fill="#bdbdbd" stroke="#999"/><path d="M2 4l10 10" stroke="#aaa"/></symbol>
<symbol id="lc2" viewBox="0 0 18 18"><path d="M9.500 7V4a3 3 0 0 1 6 0v2" stroke="#333" stroke-width="1.300"/><path d="M3.500 7.500h9v9h-9z" fill="#fff"/><path d="M8 10v4"/></symbol>
<symbol id="hw" viewBox="0 0 18 18"><path d="M1.500 3.500h12v8h-12z" fill="#ccd"/><path d="M3 1v2M6 1v2M9 1v2M3 12v2M6 12v2"/><circle cx="13" cy="8" r="2.500" fill="#6db0e0" stroke="#1f5ea8"/><path d="M13 10v6" stroke="#1f5ea8" stroke-width="2"/></symbol>
<symbol id="cln" viewBox="0 0 18 18"><path d="M1.500 1.500h15v15h-15z" fill="#fff"/><path d="M1.500 1.500h15v3h-15z" fill="#9aa0a6"/></symbol>
<symbol id="bino" viewBox="0 0 18 18"><path d="M2 7 4 2h3l1 5v9H2zM10 7l1-5h3l2 5v9h-6z" fill="#333" stroke="#eee"/><path d="M8 7h2v4H8z" fill="#eee" stroke="none"/></symbol>
<symbol id="user" viewBox="0 0 18 18"><ellipse cx="9" cy="6" rx="4" ry="5" fill="#eee" stroke="#333"/><path d="M1 17c0-3 3-4 8-4s8 1 8 4z" fill="#eee" stroke="#333"/></symbol>
<symbol id="xc" viewBox="0 0 18 18"><path d="M1 2h5l3 4 3-4h5l-5 7 5 7h-5l-3-4-3 4H1l5-7z" fill="#1c4e9f" stroke="#9ab7e4" stroke-width=".7"/></symbol>
<symbol id="wrn" viewBox="0 0 18 18"><path d="M3 16 7 1h3l3 8" stroke="#ddd" stroke-width="1.500"/><path d="M7 8h10v9H7z" fill="#e8781e" stroke="#8a3b0a"/><path d="M12 9v4M10 12l2 3 2-3" stroke="#fff"/></symbol>
<symbol id="prm" viewBox="0 0 18 18"><path d="M1.500 1.500h15v15h-15z" fill="url(#gb)" stroke="#889"/><path d="M4 5l4 3-4 3M9 13h5" stroke="#222"/></symbol>
<symbol id="wr" viewBox="0 0 18 18"><path d="M12 1a5 5 0 0 0-5 6L1 13.500 4.500 17 11 10.500a5 5 0 0 0 6-5l-3 2.500-3-2.500 2.500-3z" fill="#e5e5e5" stroke="none"/></symbol>
<symbol id="brf" viewBox="0 0 18 18"><use href="#br" y="3"/></symbol>
<symbol id="frm" viewBox="0 0 18 18"><path d="M3.500 1.500h11v15h-11z" fill="#fff"/></symbol>
<symbol id="qc" viewBox="0 0 18 18"><circle cx="9" cy="9" r="8" fill="#fff" stroke="#ddd"/></symbol>
<symbol id="abf" viewBox="0 0 18 18"><path d="M12 9.500h4v6M2 11v4h9"/><path d="M12 17l5-4v4z" fill="#111" stroke="none"/></symbol>
</svg>

<div class="app">
<header class="top">
  <div class="logo"><svg class="logoa" viewBox="0 0 26 30"><path d="M14 0h7l4 27-9-5-11 5H1z" fill="#c0171c"/><path d="M14 0h7l1 30-6-8-2-5-4 .3-4 5.700-6 5z" fill="#7d0f12" opacity=".45"/><path d="M16 7l1.500 10H11z" fill="#5a0b0d"/></svg><i class="caret blk"></i></div>
  <div class="topcol">
    <div class="title">
      <div class="qa">
        <svg class="q"><use href="#new"/></svg><svg class="q"><use href="#open"/></svg><svg class="q"><use href="#save"/></svg><svg class="q"><use href="#saveas"/></svg><svg class="q"><use href="#pub"/></svg><i class="caret dk"></i><svg class="q q2"><use href="#print"/></svg><svg class="q"><use href="#undo"/></svg><i class="caret dk"></i><svg class="q rd"><use href="#redo"/></svg><i class="caret dk"></i>
        <div class="combo wsq"><svg class="gearq"><use href="#gear"/></svg><span>AutoCAD 经典</span><i class="caret dk end"></i></div>
        <div class="more"></div>
      </div>
      <div class="glass"><span class="t1">AutoCAD 2013</span><span class="t2">C:\Us...\奶粉瓶.dwg</span></div>
      <div class="info">
        <i class="play"></i>
        <div class="search">键入关键字或短语</div>
        <svg class="q"><use href="#bino"/></svg><svg class="q"><use href="#user"/></svg><span class="login">登录</span><i class="caret dk ml"></i>
        <svg class="q xc"><use href="#xc"/></svg><svg class="q"><use href="#wrn"/></svg><i class="caret dk"></i><svg class="q qh" viewBox="0 0 18 18"><use href="#qc"/><text x="9" y="14" class="sq">?</text></svg><i class="caret dk"></i>
      </div>
      <div class="win"><b class="wb">&#8722;</b><b class="wb wr"><span class="sq1"></span></b><b class="wc">X</b></div>
    </div>
    <nav class="menu">
      <span class="m">文件(<u>F</u>)</span><span class="m">编辑(<u>E</u>)</span><span class="m">视图(<u>V</u>)</span><span class="m">插入(<u>I</u>)</span><span class="m">格式(<u>O</u>)</span><span class="m">工具(<u>T</u>)</span><span class="m">绘图(<u>D</u>)</span><span class="m">标注(<u>N</u>)</span><span class="m">修改(<u>M</u>)</span><span class="m">参数(<u>P</u>)</span><span class="m">窗口(<u>W</u>)</span><span class="m">帮助(<u>H</u>)</span>
      <span class="mdi"><b>&#8211;</b><b class="sq2"></b><b>X</b></span>
    </nav>
  </div>
</header>

<section class="bars">
  <div class="row">
    <div class="tb t1w"><i class="grip"></i>
      <svg class="b"><use href="#new"/></svg><svg class="b"><use href="#open"/></svg><svg class="b"><use href="#save"/></svg><i class="sep"></i>
      <svg class="b"><use href="#print"/></svg><svg class="b"><use href="#prev"/></svg><svg class="b"><use href="#plot"/></svg><svg class="b"><use href="#p3d"/></svg><i class="sep"></i>
      <svg class="b"><use href="#cut"/></svg><svg class="b"><use href="#copy"/></svg><svg class="b"><use href="#paste"/></svg><svg class="b"><use href="#match"/></svg><svg class="b"><use href="#bolt"/></svg><i class="sep"></i>
      <svg class="b"><use href="#undo"/></svg><i class="dd"></i><svg class="b"><use href="#redo"/></svg><i class="dd dg"></i><i class="sep"></i>
      <svg class="b"><use href="#hand"/></svg><svg class="b"><use href="#zr"/></svg><svg class="b"><use href="#zw"/></svg><svg class="b"><use href="#zp"/></svg><i class="sep"></i>
      <svg class="b"><use href="#prop"/></svg><svg class="b"><use href="#dc"/></svg><svg class="b"><use href="#tp"/></svg><svg class="b"><use href="#ss"/></svg><svg class="b"><use href="#mk"/></svg><svg class="b"><use href="#calc"/></svg><i class="sep"></i>
      <svg class="b" viewBox="0 0 18 18"><use href="#frm"/><text x="9" y="14" class="sy">?</text></svg>
    </div>
    <div class="tb styles"><i class="grip"></i>
      <svg class="b b25" viewBox="0 0 18 18"><text x="6" y="15" class="sa">A</text><use href="#brf"/></svg><div class="combo c118 pad">Standard<i class="caret blk end"></i></div>
      <i class="sep s4"></i><svg class="b b27"><use href="#dst"/></svg><div class="combo c118 pad">ISO-25<i class="caret blk end"></i></div>
      <i class="sep s4"></i><svg class="b b26"><use href="#tbs"/></svg><div class="combo c119">Standard<i class="caret blk end"></i></div>
      <i class="sep s4"></i><svg class="b b27"><use href="#mls"/></svg><div class="combo c117 pad">Standard<i class="caret blk end"></i></div>
    </div>
  </div>
  <div class="row">
    <div class="tb wsp"><i class="grip"></i>
      <div class="combo cws">AutoCAD 经典<i class="caret blk end"></i></div><svg class="b"><use href="#gear"/></svg><svg class="b"><use href="#ws"/></svg>
    </div>
    <div class="tb lyr"><i class="grip"></i>
      <svg class="b"><use href="#lay"/></svg>
      <div class="combo clyr"><svg class="li"><use href="#bulb"/></svg><svg class="li"><use href="#sun"/></svg><svg class="li"><use href="#frz"/></svg><svg class="li"><use href="#lck"/></svg><i class="swatch"></i><span class="lz">0</span><i class="caret blk end"></i></div>
      <svg class="b"><use href="#laym"/></svg><svg class="b"><use href="#layc"/></svg><svg class="b"><use href="#layp"/></svg>
    </div>
    <div class="tb prp">
      <div class="combo ccol"><i class="swatch gr"></i><span>颜色&nbsp; 9</span><i class="caret blk end"></i></div><i class="sep s7"></i>
      <div class="combo cln1"><i class="ln"></i><span class="mono">ByLayer</span><i class="caret blk end"></i></div><i class="sep s7"></i>
      <div class="combo cln2"><i class="ln l2"></i><span class="mono">ByLayer</span><i class="caret blk end"></i></div><i class="sep s7"></i>
      <div class="combo cbc"><span class="mono dim">BYCOLOR</span><i class="caret gry end"></i></div>
    </div>
  </div>
  <div class="row">
    <div class="tb"><i class="grip"></i>
      <svg class="b"><use href="#poly"/></svg><svg class="b"><use href="#box"/></svg><svg class="b"><use href="#wedge"/></svg><svg class="b"><use href="#cone"/></svg><svg class="b"><use href="#sph"/></svg><svg class="b"><use href="#cyl"/></svg><svg class="b"><use href="#tor"/></svg><svg class="b"><use href="#pyr"/></svg><svg class="b"><use href="#hel"/></svg><svg class="b"><use href="#psf"/></svg><i class="sep"></i>
      <svg class="b"><use href="#ext"/></svg><svg class="b"><use href="#pp"/></svg><svg class="b"><use href="#swp"/></svg><svg class="b"><use href="#rev"/></svg><svg class="b"><use href="#lft"/></svg><i class="sep"></i>
      <svg class="b"><use href="#un"/></svg><svg class="b"><use href="#sub"/></svg><svg class="b"><use href="#int"/></svg><i class="sep"></i>
      <svg class="b"><use href="#mv3"/></svg><svg class="b"><use href="#ro3"/></svg><svg class="b"><use href="#al3"/></svg><svg class="b"><use href="#ar3"/></svg>
    </div>
    <div class="tb"><i class="grip"></i>
      <svg class="b"><use href="#un"/></svg><svg class="b"><use href="#sub"/></svg><svg class="b"><use href="#int"/></svg><i class="sep"></i>
      <svg class="b"><use href="#fe1"/></svg><svg class="b"><use href="#fe2"/></svg><svg class="b"><use href="#fe3"/></svg><svg class="b"><use href="#fe4"/></svg><svg class="b"><use href="#fe5"/></svg><svg class="b"><use href="#fe6"/></svg><svg class="b"><use href="#fe7"/></svg><svg class="b"><use href="#fe8"/></svg><i class="sep"></i>
      <svg class="b"><use href="#ed1"/></svg><svg class="b"><use href="#ed2"/></svg><svg class="b"><use href="#ed3"/></svg><svg class="b"><use href="#fe8"/></svg><i class="sep"></i>
      <svg class="b"><use href="#s1"/></svg><svg class="b"><use href="#s2"/></svg><svg class="b"><use href="#s3"/></svg><svg class="b"><use href="#s4"/></svg><svg class="b"><use href="#s5"/></svg>
    </div>
    <div class="tb tnl"><i class="grip"></i>
      <svg class="b"><use href="#cb1"/></svg><i class="sep"></i><svg class="b"><use href="#vw1"/></svg><svg class="b"><use href="#vw2"/></svg><svg class="b"><use href="#vw3"/></svg><svg class="b"><use href="#vw4"/></svg><i class="sep"></i><svg class="b"><use href="#vw5"/></svg>
    </div>
  </div>
  <div class="row">
    <div class="tb"><i class="grip"></i>
      <svg class="b"><use href="#vt"/></svg><i class="sep"></i>
      <svg class="b"><use href="#v1"/></svg><svg class="b"><use href="#v2"/></svg><svg class="b"><use href="#v3"/></svg><svg class="b"><use href="#v4"/></svg><svg class="b"><use href="#v5"/></svg><svg class="b"><use href="#v6"/></svg><i class="sep"></i>
      <svg class="b"><use href="#d1"/></svg><svg class="b"><use href="#d2"/></svg><svg class="b"><use href="#d3"/></svg><svg class="b"><use href="#d4"/></svg><i class="sep"></i>
      <svg class="b"><use href="#cam"/></svg><i class="sep"></i><svg class="b"><use href="#vid"/></svg>
      <div class="combo cvp"><i class="caret gry end"></i></div>
    </div>
  </div>
</section>

<main class="work">
  <aside class="dockl">
    <div class="vtb vl"><i class="vgrip"></i>
      <svg class="v"><use href="#line"/></svg><svg class="v"><use href="#xl"/></svg><svg class="v"><use href="#pl"/></svg><svg class="v"><use href="#pg"/></svg><svg class="v"><use href="#rc"/></svg><svg class="v"><use href="#ac"/></svg><svg class="v"><use href="#ci"/></svg><svg class="v"><use href="#rv"/></svg><svg class="v"><use href="#sp"/></svg><svg class="v"><use href="#el"/></svg><svg class="v"><use href="#ea"/></svg><svg class="v"><use href="#ins"/></svg><svg class="v"><use href="#mkb"/></svg><svg class="v"><use href="#sd"/></svg><svg class="v"><use href="#ha"/></svg><svg class="v"><use href="#gr"/></svg><svg class="v"><use href="#rg"/></svg><svg class="v"><use href="#tb"/></svg><svg class="v" viewBox="0 0 18 18"><text x="9" y="16" class="sb">A</text></svg><svg class="v"><use href="#as"/></svg>
    </div>
  </aside>
  <div class="frame">
    <div class="upper">
      <div class="view">
        <svg class="model" viewBox="30 155 1199 696" xmlns="http://www.w3.org/2000/svg">
          <defs>
            <linearGradient id="body" gradientUnits="userSpaceOnUse" x1="252" y1="0" x2="941" y2="0"><stop offset="0" stop-color="#7f7f7f"/><stop offset=".13" stop-color="#707070"/><stop offset=".29" stop-color="#696969"/><stop offset=".57" stop-color="#6a6a6a"/><stop offset=".68" stop-color="#7b7b7b"/><stop offset=".77" stop-color="#8a8a8a"/><stop offset=".8" stop-color="#8c8c8c"/><stop offset=".87" stop-color="#7c7c7c"/><stop offset=".95" stop-color="#6e6e6e"/><stop offset="1" stop-color="#737373"/></linearGradient>
            <linearGradient id="band" gradientUnits="userSpaceOnUse" x1="258" y1="0" x2="936" y2="0"><stop offset="0" stop-color="#7d7d7d"/><stop offset=".04" stop-color="#6e6e6e"/><stop offset=".12" stop-color="#767676"/><stop offset=".22" stop-color="#8c8c8c"/><stop offset=".37" stop-color="#7c7c7c"/><stop offset=".5" stop-color="#6b6b6b"/><stop offset=".68" stop-color="#6c6c6c"/><stop offset=".88" stop-color="#7a7a7a"/><stop offset="1" stop-color="#868686"/></linearGradient>
            <linearGradient id="glow" gradientUnits="userSpaceOnUse" x1="305" y1="0" x2="805" y2="0"><stop offset="0" stop-color="#707070"/><stop offset=".12" stop-color="#787878"/><stop offset=".2" stop-color="#a0a0a0"/><stop offset=".3" stop-color="#d6d6d6"/><stop offset=".4" stop-color="#bdbdbd"/><stop offset=".5" stop-color="#8e8e8e"/><stop offset=".62" stop-color="#838383"/><stop offset=".85" stop-color="#7f7f7f"/><stop offset="1" stop-color="#8c8c8c"/></linearGradient>
            <linearGradient id="seam" gradientUnits="userSpaceOnUse" x1="252" y1="0" x2="941" y2="0"><stop offset="0" stop-color="#9e9e9e"/><stop offset=".65" stop-color="#969696"/><stop offset=".78" stop-color="#7f7f7f"/><stop offset=".9" stop-color="#888"/><stop offset="1" stop-color="#9a9a9a"/></linearGradient>
            <polyline id="seam1" points="252,532 258,567 279,608 311,642 355,672 403,695 463,713 525,725 575,728 621,728 653,727 715,717 777,700 828,677 874,648 908,617 931,580 939,550 941,541" fill="none" stroke="url(#seam)"/>
          </defs>
          <polygon fill="url(#body)" points="252,438 256,403 276,365 300,335 340,305 385,280 445,258 507,245 562,239 637,239 703,248 763,263 817,283 860,308 900,342 927,377 939,413 941,447 941,851 252,851"/>
          <polygon fill="#8c8c8c" points="252,438 256,403 276,365 300,335 340,305 385,280 445,258 507,245 562,239 637,239 703,248 763,263 817,283 860,308 900,342 927,377 939,413 941,447 930,470 260,470"/>
          <polygon fill="url(#band)" points="260,444 260,437 264,403 282,367 307,342 350,312 400,283 453,263 507,250 573,243 637,243 703,252 763,268 817,288 857,313 897,345 923,377 933,417 935,440 934,452 920,440 300,440"/>
          <polygon fill="#8b8b8b" points="260,443 265,427 283,392 315,355 363,320 410,298 460,283 507,273 557,267 600,266 637,267 690,273 737,283 787,300 830,320 867,345 910,390 930,428 933,448 941,450 930,490 905,528 882,550 874,557 828,583 777,607 717,624 653,633 612,636 575,636 522,633 463,621 403,603 355,580 311,550 278,515 260,482 252,443"/>
          <polygon fill="url(#glow)" points="305,467 308,432 320,402 342,372 367,352 410,325 453,308 507,295 557,289 600,287 623,287 667,292 717,301 760,317 803,338 803,339 760,325 713,310 667,300 623,296 557,295 507,303 457,317 412,335 370,358 342,380 322,407 308,438 306,467"/>
          <polyline fill="none" stroke="#838383" stroke-width="1.500" points="885,428 888,450 887,483"/>
          <polyline fill="none" stroke="#848484" stroke-width="1.500" points="838,363 865,392"/>
          <polyline fill="none" stroke="#777" stroke-dasharray="1 3" points="265,465 272,490"/>
          <polyline fill="none" stroke="#777" stroke-dasharray="1 3" points="307,468 311,493"/>
          <use href="#seam1"/><use href="#seam1" y="141"/><use href="#seam1" y="282"/>
        </svg>
        <div class="vplabel">[&#8722;][西南等轴测][真实]</div>
        <svg class="ucs" viewBox="0 0 60 90" xmlns="http://www.w3.org/2000/svg">
          <path d="M17 24V60" stroke="#0d7a12" stroke-width="5"/><path d="M15 22h4v4h-4z" fill="#9de08e"/>
          <path d="M19 60 52 41" stroke="#b32a24" stroke-width="5" stroke-linecap="round"/>
          <path d="M17 61 52 81" stroke="#1a70d8" stroke-width="5" stroke-linecap="round"/>
          <path d="M15 7l7 6 6-6M22 13v7" stroke="#1f9e2a" fill="none"/>
          <path d="M54 31l12 12M66 31 54 43" stroke="#c43a36" fill="none" transform="translate(-6 -3)"/>
          <path d="M53 66h12L53 78h12" stroke="#2379e0" fill="none" transform="translate(-4 2)"/>
        </svg>
        <div class="cube">
          <svg viewBox="0 0 130 110" xmlns="http://www.w3.org/2000/svg">
            <defs><radialGradient id="halo"><stop offset="0" stop-color="#b8bcc2" stop-opacity=".35"/><stop offset="1" stop-color="#b8bcc2" stop-opacity="0"/></radialGradient></defs>
            <ellipse cx="65" cy="67" rx="55.500" ry="34.500" fill="none" stroke="#434a52" stroke-width="13"/>
            <circle cx="64" cy="38" r="44" fill="url(#halo)"/>
            <path d="M65 4 99 22 65 40 31 22z" fill="#9b9b9b" stroke="#6f6f6f"/>
            <path d="M31 22 65 40 65 80 34 60z" fill="#959595" stroke="#6f6f6f"/>
            <path d="M99 22 65 40 65 80 96 60z" fill="#8d8d8d" stroke="#6f6f6f"/>
            <path d="M65 34 72 38 65 47 58 38z" fill="#a3a6ad" opacity=".7"/>
            <text class="fc" transform="matrix(.85 .45 -.85 .45 58 25)" text-anchor="middle">后</text>
            <text class="fc" transform="matrix(.75 .42 0 .9 47 56)" text-anchor="middle">左</text>
            <text class="fc" transform="matrix(.75 -.42 0 .9 84 58)" text-anchor="middle">上</text>
            <text class="cp" transform="matrix(.8 .45 -.8 .45 23.400 43)" text-anchor="middle">北</text>
            <text class="cp" transform="matrix(.8 -.45 .8 .45 108.600 42)" text-anchor="middle">东</text>
            <text class="cp lg" transform="matrix(.8 -.45 .8 .45 25.600 94)" text-anchor="middle">西</text>
            <text class="cp lg" transform="matrix(.8 .45 -.8 .45 105.400 96)" text-anchor="middle">南</text>
          </svg>
          <div class="unnamed">未命名<i></i></div>
        </div>
      </div>
      <div class="vscroll"><i class="aup"></i><i class="thumb"></i><i class="adn"></i></div>
    </div>
    <div class="tabs">
      <span class="nav"><i class="navb first"></i><i class="navb prev"></i><i class="navb next"></i><i class="navb last"></i></span>
      <span class="tab on">模型</span><span class="tab">布局1</span><span class="tab">布局2</span>
      <div class="hscroll"><i class="hl"></i><i class="hthumb"></i><i class="hr"></i></div>
    </div>
  </div>
  <aside class="dockr">
    <div class="vtb"><i class="vgrip"></i>
      <svg class="v"><use href="#er"/></svg><svg class="v"><use href="#co"/></svg><svg class="v"><use href="#mi"/></svg><svg class="v"><use href="#of"/></svg><svg class="v"><use href="#ay"/></svg><svg class="v"><use href="#mo"/></svg><svg class="v"><use href="#ro"/></svg><svg class="v"><use href="#sc"/></svg><svg class="v"><use href="#st"/></svg><svg class="v"><use href="#tr"/></svg><svg class="v"><use href="#xt"/></svg><svg class="v"><use href="#bp"/></svg><svg class="v"><use href="#bk"/></svg><svg class="v"><use href="#jn"/></svg><svg class="v"><use href="#ch"/></svg><svg class="v"><use href="#fi"/></svg><svg class="v"><use href="#bl"/></svg><svg class="v"><use href="#xp"/></svg>
    </div>
    <div class="vtb v2"><i class="vgrip"></i>
      <svg class="v h22"><use href="#o1"/></svg><svg class="v h22"><use href="#o2"/></svg><svg class="v h22"><use href="#o3"/></svg><svg class="v h22"><use href="#o4"/></svg><i class="hsep"></i><svg class="v h22" viewBox="0 0 18 18"><text x="8" y="7.500" class="sc">ABC</text><use href="#abf"/></svg><svg class="v h22"><use href="#stx"/></svg>
    </div>
  </aside>
</main>

<div class="dimrow">
  <div class="tb dimtb"><i class="grip"></i>
    <svg class="b"><use href="#dl"/></svg><svg class="b"><use href="#da"/></svg><svg class="b"><use href="#dc2"/></svg><svg class="b"><use href="#dor"/></svg><i class="sep"></i>
    <svg class="b"><use href="#dr"/></svg><svg class="b"><use href="#dj"/></svg><svg class="b"><use href="#dd"/></svg><svg class="b"><use href="#dg"/></svg><i class="sep"></i>
    <svg class="b"><use href="#dq"/></svg><svg class="b"><use href="#db"/></svg><svg class="b"><use href="#dn"/></svg><svg class="b"><use href="#ds"/></svg><svg class="b"><use href="#dk"/></svg><i class="sep"></i>
    <svg class="b"><use href="#dt"/></svg><svg class="b"><use href="#dm"/></svg><svg class="b"><use href="#di"/></svg><svg class="b"><use href="#dw"/></svg><i class="sep"></i>
    <svg class="b"><use href="#de"/></svg><svg class="b" viewBox="0 0 18 18"><use href="#dxb"/><text x="9" y="11" class="sd">A</text></svg><svg class="b"><use href="#du"/></svg><i class="sep"></i>
    <div class="combo c120">ISO-25<i class="caret blk end"></i></div><svg class="b"><use href="#dst"/></svg>
  </div>
</div>

<section class="cmd">
  <div class="cmdl"><i class="cgrip"></i><b class="cx">&#10005;</b><svg class="wrn2"><use href="#wr"/></svg></div>
  <div class="cmdr">
    <div class="hist">
      <div class="hl1"><b class="z">命令</b>: _vscurrent</div>
      <div class="hl1"><b class="z">输入选项</b> [<b class="z">二维线框</b>(2)/<b class="z">线框</b>(W)/<b class="z">隐藏</b>(H)/<b class="z">真实</b>(R)/<b class="z">概念</b>(C)/<b class="z">着色</b>(S)/<b class="z">带边缘着色</b>(E)/<b class="z">灰度</b>(G)/<b class="z">勾画</b>(SK)/X <b class="z">射线</b>(X)/<b class="z">其他</b>(O)] &lt;<b class="z">线框</b>&gt;: _R</div>
    </div>
    <div class="input"><svg class="prompt"><use href="#prm"/></svg><i class="caret gry"></i><span class="ph">键入命令</span></div>
  </div>
</section>

<footer class="status">
  <span class="coords">2616.5886, 435.5837 , 0.0000</span>
  <div class="stg">
    <svg class="s"><use href="#st1"/></svg><svg class="s"><use href="#st2"/></svg><svg class="s"><use href="#st3"/></svg><svg class="s on"><use href="#st4"/></svg><svg class="s"><use href="#st5"/></svg><svg class="s on"><use href="#st6"/></svg><svg class="s on"><use href="#st7"/></svg><svg class="s on"><use href="#st8"/></svg><svg class="s on"><use href="#st9"/></svg><svg class="s"><use href="#st10"/></svg><svg class="s"><use href="#st11"/></svg><svg class="s on"><use href="#st12"/></svg><svg class="s"><use href="#calc"/></svg><svg class="s"><use href="#st14"/></svg><svg class="s"><use href="#st15"/></svg>
  </div>
  <div class="str">
    <span class="mtext">模型</span><svg class="s"><use href="#sl"/></svg><svg class="s w23"><use href="#sll"/></svg><i class="blank"></i>
    <svg class="s"><use href="#an"/></svg><span class="scale">1:1</span><i class="caret blk"></i><svg class="s"><use href="#an2"/></svg><svg class="s"><use href="#an3"/></svg><i class="gap"></i>
    <svg class="s"><use href="#gear"/></svg><svg class="s"><use href="#lc2"/></svg><svg class="s"><use href="#hw"/></svg><svg class="s dark"><use href="#bulb"/></svg><i class="caret blk cw"></i><svg class="s"><use href="#cln"/></svg>
  </div>
</footer>

<div class="mark">
  <span class="bai">Bai</span>
  <svg class="paw" viewBox="0 0 70 72" xmlns="http://www.w3.org/2000/svg"><ellipse cx="27" cy="11" rx="6.500" ry="10.500" transform="rotate(-8 27 11)"/><ellipse cx="45" cy="11" rx="6.500" ry="10.500" transform="rotate(8 45 11)"/><ellipse cx="9" cy="30" rx="7" ry="10.500" transform="rotate(-20 9 30)"/><ellipse cx="61" cy="30" rx="7" ry="10.500" transform="rotate(20 61 30)"/><path d="M35 27c9 0 13 9 21 15 8 6 8 26-9 26-5 0-8-2-12-2s-7 2-12 2C6 68 6 48 14 42c8-6 12-15 21-15z"/><text x="35" y="63" class="du">du</text></svg>
  <span class="jy">经验</span>
  <span class="url">jingyan.baidu.com</span>
</div>
</div>
</body>
</html>
```

FILE: styles.css
```css
* { box-sizing: border-box; }
html, body { margin: 0; padding: 0; background: #636363; overflow: hidden; }
body { width: 1280px; height: 982px; }
i, b { font-style: normal; font-weight: normal; display: block; flex: none; }
.defs { display: block; width: 0; height: 0; }
.app { position: relative; width: 1280px; height: 982px; font: 12px "Noto Sans", "Noto Sans CJK SC", sans-serif; color: #1a1a1a; overflow: hidden; }
svg { fill: none; stroke: #2f2f2f; stroke-width: 1; display: block; flex: none; }

.sy { font: bold 13px "Liberation Sans", sans-serif; fill: #222; stroke: none; text-anchor: middle; }
.sa { font: bold 16px "Liberation Sans", sans-serif; fill: #333; stroke: none; text-anchor: middle; }
.sb { font: bold 21px "Liberation Sans", sans-serif; fill: #2a2a2a; stroke: none; text-anchor: middle; }
.sc { font: bold 6.500px "Liberation Mono", monospace; fill: #111; stroke: none; text-anchor: middle; }
.sd { font: bold 9px "Liberation Sans", sans-serif; fill: #111; stroke: none; text-anchor: middle; }
.sq { font: bold 14px "Liberation Sans", sans-serif; fill: #1c4e9f; stroke: none; text-anchor: middle; }

/* top */
.top { display: flex; height: 44px; border-bottom: 1px solid #3a3a3a; background: #6a6a6a; }
.logo { width: 40px; height: 40px; display: flex; align-items: center; padding-left: 4px; gap: 1px; background: linear-gradient(#8e8e8e, #5f5f5f); border: 1px solid #555; flex: none; }
.logoa { width: 27px; height: 35px; stroke: none; }
.caret { width: 0; height: 0; border-left: 3.500px solid transparent; border-right: 3.500px solid transparent; border-top: 4px solid #222; }
.caret.gry { border-top-color: #9a9a9a; }
.caret.dk { border-top-color: #4d4d4d; }
.caret.end { margin-left: auto; }
.topcol { flex: 1; min-width: 0; display: flex; flex-direction: column; }
.title { height: 23px; display: flex; align-items: stretch; border-bottom: 1px solid #3a3a3a; }
.qa { width: 428px; display: flex; align-items: center; padding-left: 6px; background: linear-gradient(#8a8a8a, #6f6f6f); flex: none; }
.q { width: 22px; height: 18px; padding: 0 2px; }
.q.q2 { margin-left: 1px; }
.qa .q { width: 24px; }
.qa .q.rd { margin-left: 1px; }
.qa > .caret { margin: 0 1.500px; }
.wsq { width: 178px; height: 20px; margin-left: 3px; padding-left: 2px; gap: 1px; font-size: 12px; }
.gearq { width: 18px; height: 18px; }
.more { width: 14px; height: 21px; margin-left: 2px; border-top: 2px solid #222; background: linear-gradient(#c2c2c2, #9a9a9a); }
.more::after { content: ""; display: block; margin: 5px auto 0; width: 0; height: 0; border-left: 4px solid transparent; border-right: 4px solid transparent; border-top: 5px solid #222; }
.glass { width: 245px; flex: none; display: flex; align-items: center; padding-left: 18px; gap: 19px; font-size: 12px; color: #10243f; background: radial-gradient(ellipse 80px 30px at 215px 18px, #eef6fb, transparent), radial-gradient(ellipse 60px 16px at 70px 2px, #7eb0dd, transparent), linear-gradient(90deg, #1c4f9c, #3c7cc4 30%, #79acd9 70%, #bcd7ec); white-space: nowrap; overflow: hidden; }
.info { width: 445px; flex: none; display: flex; align-items: center; background: linear-gradient(#868686, #707070); }
.play { width: 0; height: 0; border-top: 5px solid transparent; border-bottom: 5px solid transparent; border-left: 5px solid #111; margin: 0 5px 0 5px; }
.search { width: 178px; height: 21px; background: #fff; padding: 3px 2px; font-style: italic; font-size: 11px; color: #8c8c8c; margin-right: 3px; white-space: nowrap; }
.info .q { width: 24px; }
.login { color: #e4e4e4; margin-left: -1px; width: 81px; flex: none; }
.ml { margin-right: 8px; }
.info .xc { width: 23px; }
.qh { margin-left: 18px; }
.win { flex: 1; display: flex; padding-left: 16px; background: radial-gradient(ellipse 60px 12px at 60px 24px, #e6f2fa, transparent), linear-gradient(90deg, #1d56a3, #5c96cf 60%, #bcd8ee); color: #fff; }
.wb { width: 28px; height: 17px; border: 1px solid rgba(255,255,255,.55); border-top: 0; border-radius: 0 0 3px 3px; text-align: center; font: bold 12px/15px "Liberation Sans", sans-serif; background: rgba(60,110,170,.55); }
.wb.wr { width: 23px; padding: 3px 0 0 7px; }
.sq1 { display: block; width: 9px; height: 9px; border: 2px solid #fff; }
.wc { flex: 1; text-align: center; font: bold 12px/15px "Liberation Sans", sans-serif; height: 17px; background: rgba(60,110,170,.35); border-bottom: 1px solid rgba(255,255,255,.55); }
.menu { flex: 1; display: flex; align-items: center; padding-left: 15px; color: #dadada; font-size: 12px; background: linear-gradient(#7a7a7a, #555); white-space: nowrap; }
.m { flex: none; margin-right: 25.200px; }
.mdi { margin-left: auto; display: flex; gap: 4px; align-items: center; padding-right: 5px; color: #111; font: bold 13px "Liberation Sans", sans-serif; }
.sq2 { width: 10px; height: 10px; border: 1px solid #111; box-shadow: 2px -2px 0 -1px #111; }

/* toolbars */
.bars { display: flex; flex-direction: column; gap: 3px; padding: 0 0 0 2px; height: 106px; }
.row { display: flex; gap: 2px; height: 24px; }
.tb { display: flex; align-items: center; height: 24px; background: #eeeeee; border: 1px solid #3d3d3d; border-left-width: 1px; flex: none; }
.grip { width: 6px; align-self: stretch; background: radial-gradient(circle, #111 .7px, transparent .8px) 1.500px 1px / 2px 2px, #585858; background-clip: padding-box; flex: none; }
.b { width: 23px; height: 22px; padding: 2px 2.500px; }
.b25 { width: 25px; background: #cfcfcf; }
.b26 { width: 26px; }
.b27 { width: 27px; }
.sep { width: 6px; height: 20px; flex: none; background: linear-gradient(#aaa, #aaa) center / 1px 100% no-repeat; }
.s4 { width: 4px; }
.s7 { width: 9px; }
.dd { width: 12px; height: 4px; }
.dd::after { content: ""; display: block; margin: 0 auto; width: 0; height: 0; border-left: 3.500px solid transparent; border-right: 3.500px solid transparent; border-top: 4px solid #444; }
.dd.dg::after { border-top-color: #aaa; }
.t1w { width: 644px; }
.styles { width: 598px; }
.tnl { margin-left: -2px; }

.combo { display: flex; align-items: center; height: 20px; padding: 0 5px 0 4px; font-size: 12px; color: #1a1a1a; background: linear-gradient(#f8f8f8, #d4d4d4); border: 1px solid #b8b8b8; border-radius: 3px; white-space: nowrap; flex: none; }
.pad { padding-left: 17px; }
.c118 { width: 118px; }
.c119 { width: 119px; }
.c117 { width: 117px; }
.cws { width: 172px; padding-left: 8px; }
.wsp { width: 228px; }
.lyr { width: 405px; }
.clyr { width: 299px; padding-left: 3px; gap: 0; }
.li { width: 16px; height: 17px; }
.swatch { width: 11px; height: 11px; border: 1px solid #111; background: #fff; margin-left: 1px; }
.swatch.gr { background: #cfcfcf; border-color: #555; margin: 0 2px 0 0; }
.lz { margin-left: 5px; }
.prp { width: 575px; padding-left: 2px; }
.ccol { width: 147px; }
.cln1 { width: 159px; padding-left: 4px; }
.cln2 { width: 121px; padding-left: 4px; }
.cbc { width: 118px; padding-left: 8px; background: #f2f2f2; }
.ln { width: 58px; height: 1px; background: #111; margin-right: 7px; }
.ln.l2 { width: 33px; margin-right: 5px; }
.mono { font: 10px "Liberation Mono", monospace; font-weight: normal; }
.mono.dim { color: #8f8f8f; }
.cvp { width: 138px; margin-left: 1px; background: #f5f5f5; }

/* work */
.work { display: flex; height: 714px; margin-top: 5px; }
.dockl { width: 30px; flex: none; padding: 1px 0 0 1px; }
.dockr { width: 32px; flex: none; padding: 0 0 0 5px; display: flex; flex-direction: column; gap: 2px; }
.vtb { width: 24px; background: #eeeeee; border: 1px solid #3d3d3d; flex: none; display: flex; flex-direction: column; align-items: center; }
.vl { width: 23px; }
.vgrip { width: 100%; height: 8px; flex: none; background: radial-gradient(circle, #ccc .7px, transparent .8px) 1px 1.500px / 2px 2px, #585858; }
.v { width: 22px; height: 21.900px; padding: 2px; }
.h22 { height: 22px; }
.hsep { width: 20px; height: 6px; background: linear-gradient(#aaa, #aaa) center / 100% 1px no-repeat; }
.frame { width: 1218px; flex: none; display: flex; flex-direction: column; background: #f0f0f0; box-shadow: -1px -1px 0 #9a9a9a; }
.upper { display: flex; height: 697px; }
.view { position: relative; width: 1199px; height: 696px; background: #202831; overflow: hidden; flex: none; }
.model { width: 1199px; height: 696px; stroke: none; }
.vplabel { position: absolute; left: 5px; top: 4px; color: #d9dce0; font: 12px "Noto Sans CJK SC", sans-serif; }
.ucs { position: absolute; left: 34px; top: 582px; width: 60px; height: 90px; overflow: visible; stroke: none; }
.cube { position: absolute; left: 1053px; top: 40px; width: 130px; height: 145px; }
.cube svg { width: 130px; height: 110px; stroke: none; overflow: visible; }
.fc { font: 20px "Noto Sans CJK SC", sans-serif; fill: #585858; }
.cp { font: 13px "Noto Sans CJK SC", sans-serif; fill: #aeb2b8; }
.cp.lg { font-size: 20px; fill: #c9cbcf; }
.unnamed { position: absolute; left: 36px; top: 128px; width: 58px; height: 16px; border-radius: 4px; background: #737a88; color: #a5a9b2; font: 11px/16px "Noto Sans CJK SC", sans-serif; letter-spacing: 1px; padding-left: 4px; display: flex; align-items: center; gap: 4px; }
.unnamed i { width: 0; height: 0; border-left: 4px solid transparent; border-right: 4px solid transparent; border-top: 5px solid #a5a9b2; }
.vscroll { flex: 1; background: #efefef; display: flex; flex-direction: column; align-items: center; padding-top: 8px; }
.aup { width: 0; height: 0; border-left: 4px solid transparent; border-right: 4px solid transparent; border-bottom: 4px solid #444; }
.thumb { width: 15px; height: 15px; margin-top: 303px; background: linear-gradient(90deg, #fafafa, #c8c8c8); border: 1px solid #a0a0a0; border-radius: 2px; }
.adn { width: 0; height: 0; border-left: 4px solid transparent; border-right: 4px solid transparent; border-top: 4px solid #444; margin-top: 356px; }
.tabs { height: 17px; display: flex; align-items: center; background: #efefef; border-bottom: 2px solid #fff; font: 12px "Noto Sans CJK SC", sans-serif; }
.nav { display: flex; padding-left: 4px; gap: 3px; width: 60px; flex: none; }
.navb { width: 11px; height: 12px; border: 1px solid #c4c4c4; background: #f8f8f8; display: flex; align-items: center; justify-content: center; }
.navb::after { content: ""; width: 0; height: 0; border-top: 4px solid transparent; border-bottom: 4px solid transparent; }
.first::after, .prev::after { border-right: 5px solid #444; }
.next::after, .last::after { border-left: 5px solid #444; }
.first { border-left: 2px solid #444; }
.last { border-right: 2px solid #444; }
.tab { display: block; position: relative; flex: none; padding: 0 7px; height: 15px; line-height: 15px; margin-right: 2px; z-index: 0; }
.tab::before { content: ""; position: absolute; inset: 0; transform: skewX(-18deg); border-right: 1px solid #333; z-index: -1; }
.tab.on { color: #fff; padding: 0 8px; margin-right: 0; }
.tab.on::before { background: #202831; }
.hscroll { margin-left: auto; width: 427px; height: 15px; display: flex; align-items: center; background: #efefef; border-left: 2px solid #bbb; flex: none; }
.hl { width: 0; height: 0; border-top: 4px solid transparent; border-bottom: 4px solid transparent; border-right: 4px solid #222; margin-left: 9px; }
.hthumb { width: 15px; height: 13px; margin-left: 8px; background: linear-gradient(#fafafa, #c8c8c8); border: 1px solid #a0a0a0; border-radius: 2px; }
.hr { width: 0; height: 0; border-top: 4px solid transparent; border-bottom: 4px solid transparent; border-left: 4px solid #222; margin-left: 358px; }

.dimrow { height: 24px; margin-top: 4px; padding-left: 30px; }
.dimtb { width: 640px; }
.c120 { width: 120px; padding-left: 18px; }

/* command */
.cmd { display: flex; height: 58px; margin-top: 8px; border-bottom: 1px solid #333; }
.cmdl { width: 21px; flex: none; background: #555; display: flex; flex-direction: column; align-items: center; }
.cgrip { width: 21px; height: 10px; background: radial-gradient(circle, #c9c9c9 .7px, transparent .8px) 1px 2px / 3px 3px, #6f6f6f; }
.cx { color: #e5e5e5; font: bold 12px/16px "Liberation Sans", sans-serif; margin-top: 4px; }
.wrn2 { width: 18px; height: 18px; margin-top: 7px; stroke: none; }
.cmdr { flex: 1; min-width: 0; display: flex; flex-direction: column; }
.hist { height: 33px; padding: 1px 0 0 5px; background: #c7c7c7; font: 11.670px/14px "Liberation Mono", monospace; color: #111; border-bottom: 1px solid #555; white-space: nowrap; }
.hl1 { height: 14px; }
.z { display: inline; font: 13px/14px "Noto Sans CJK SC", sans-serif; letter-spacing: 1px; }
.input { flex: 1; display: flex; align-items: center; padding-left: 7px; background: #fff; }
.prompt { width: 14px; height: 14px; margin-right: 3px; }
.ph { margin-left: 9px; color: #a0a0a0; font: italic 11px "Noto Sans CJK SC", sans-serif; letter-spacing: 3px; }

/* status */
.status { display: flex; align-items: stretch; height: 19px; background: linear-gradient(#5f5f5f, #8a8a8a); white-space: nowrap; }
.coords { width: 217px; padding: 2px 0 0 11px; color: #9a9a9a; font: 12px "Liberation Sans", sans-serif; letter-spacing: .5px; flex: none; }
.stg { display: flex; flex: none; }
.s { width: 22px; height: 19px; padding: 1px 2px; background: linear-gradient(#a8a8a8, #c6c6c6); border-left: 1px solid #555; }
.s.on { background: linear-gradient(#a2d0de, #d8e6ea); }
.s.dark { width: 31px; background: #6a6a6a; margin-left: 1px; }
.str { margin-left: auto; display: flex; align-items: center; height: 19px; }
.mtext { width: 30px; height: 19px; background: #bdbdbd; font: 13px/19px "Noto Sans CJK SC", sans-serif; text-align: center; border-left: 1px solid #555; }
.w23 { width: 23px; }
.blank { width: 18px; height: 19px; background: #757575; }
.scale { height: 19px; padding-left: 2px; background: #bdbdbd; font: 12px/19px "Liberation Mono", monospace; width: 27px; }
.str .caret { margin: 0 2px; }
.gap { width: 5px; }
.str .cw { margin: 0 3px; }

/* watermark */
.mark { position: absolute; left: 0; top: 0; width: 1280px; height: 982px; color: rgba(255,255,255,.62); pointer-events: none; }
.bai { position: absolute; left: 984px; top: 866px; font: bold 54px/62px "Liberation Sans", sans-serif; }
.paw { position: absolute; left: 1060px; top: 845px; width: 72px; height: 74px; fill: rgba(255,255,255,.62); stroke: none; }
.du { font: bold 26px "Liberation Sans", sans-serif; fill: #7f7f7f; text-anchor: middle; }
.jy { position: absolute; left: 1132px; top: 872px; font: bold 37px/46px "Noto Sans CJK SC", sans-serif; }
.url { position: absolute; left: 982px; top: 920px; font: 29px/36px "Liberation Sans", sans-serif; color: rgba(255,255,255,.55); text-shadow: 0 0 1px rgba(110,110,110,.7); }
```
